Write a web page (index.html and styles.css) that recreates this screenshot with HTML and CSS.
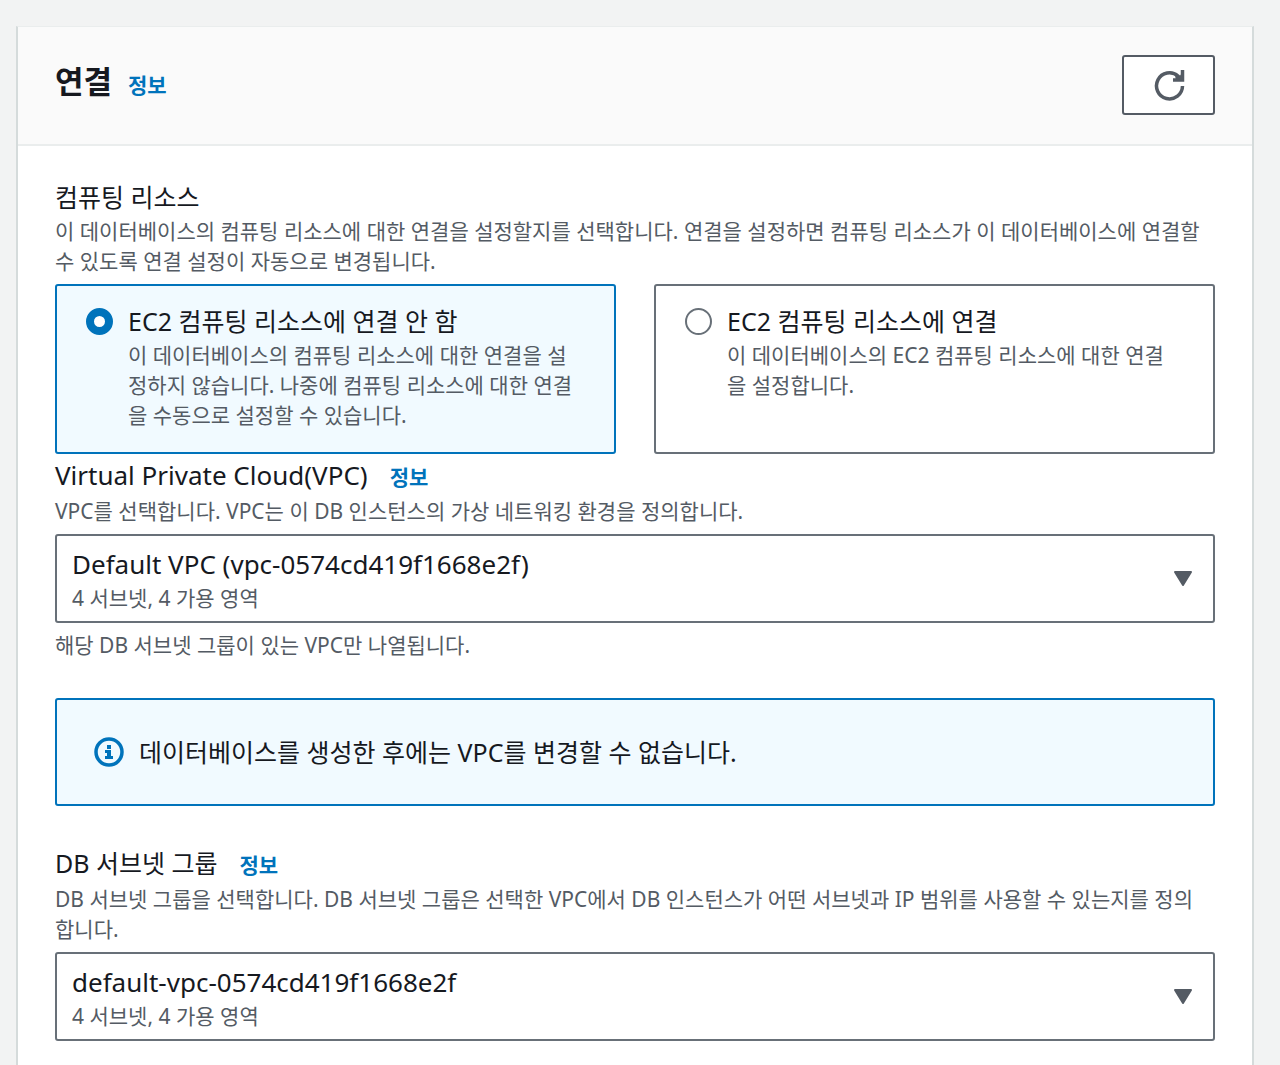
FILE: index.html
```
<!DOCTYPE html>
<html lang="ko">
<head>
  <meta charset="UTF-8">
  <meta name="viewport" content="width=device-width, initial-scale=1">
  <title>연결</title>
  <link rel="stylesheet" href="styles.css">
</head>
<body>
  <section class="panel">
    <header class="panel-header">
      <h2>연결</h2>
      <a class="info" href="#">정보</a>
      <button class="refresh" type="button" aria-label="새로 고침">
        <svg width="32" height="32" viewBox="0 0 32 32" fill="none" stroke="currentColor" stroke-width="3.5">
          <path d="M29.500 17a13 13 0 1 1-4.500-10l3 3"/>
          <path d="M29.500 1v10H20"/>
          <path d="M22 6l4 2 3-4v8h-6z" fill="currentColor" stroke="none"/>
        </svg>
      </button>
    </header>

    <form class="panel-body">
      <fieldset class="field">
        <legend class="label">컴퓨팅 리소스</legend>
        <p class="desc">이 데이터베이스의 컴퓨팅 리소스에 대한 연결을 설정할지를 선택합니다. 연결을 설정하면 컴퓨팅 리소스가 이 데이터베이스에 연결할 수 있도록 연결 설정이 자동으로 변경됩니다.</p>
        <div class="tiles">
          <label class="tile">
            <input type="radio" name="compute" checked>
            <span class="tile-text">
              <span class="label">EC2 컴퓨팅 리소스에 연결 안 함</span>
              <span class="desc">이 데이터베이스의 컴퓨팅 리소스에 대한 연결을 설정하지 않습니다. 나중에 컴퓨팅 리소스에 대한 연결을 수동으로 설정할 수 있습니다.</span>
            </span>
          </label>
          <label class="tile">
            <input type="radio" name="compute">
            <span class="tile-text">
              <span class="label">EC2 컴퓨팅 리소스에 연결</span>
              <span class="desc">이 데이터베이스의 EC2 컴퓨팅 리소스에 대한 연결을 설정합니다.</span>
            </span>
          </label>
        </div>
      </fieldset>

      <div class="field">
        <div class="label-row">
          <label class="label" for="vpc" lang="en">Virtual Private Cloud(VPC)</label>
          <a class="info" href="#">정보</a>
        </div>
        <p class="desc">VPC를 선택합니다. VPC는 이 DB 인스턴스의 가상 네트워킹 환경을 정의합니다.</p>
        <div class="select">
          <select id="vpc" lang="en" aria-describedby="vpc-detail">
            <option>Default VPC (vpc-0574cd419f1668e2f)</option>
          </select>
          <span class="desc" id="vpc-detail">4 서브넷, 4 가용 영역</span>
          <svg class="caret" width="20" height="16" viewBox="0 0 20 16"><path d="M2 1h16L10 14z" fill="currentColor" stroke="currentColor" stroke-width="2" stroke-linejoin="round"/></svg>
        </div>
        <p class="desc">해당 DB 서브넷 그룹이 있는 VPC만 나열됩니다.</p>
      </div>

      <div class="alert">
        <svg width="30" height="30" viewBox="0 0 30 30" fill="none" stroke="currentColor">
          <circle cx="15" cy="15" r="13" stroke-width="3.5"/>
          <path d="M13 8h4v4h-4zM11 13h6v6h2v3h-8v-3h2v-3h-2z" fill="currentColor" stroke="none"/>
        </svg>
        <span>데이터베이스를 생성한 후에는 VPC를 변경할 수 없습니다.</span>
      </div>

      <div class="field">
        <div class="label-row">
          <label class="label" for="subnet">DB 서브넷 그룹</label>
          <a class="info" href="#">정보</a>
        </div>
        <p class="desc">DB 서브넷 그룹을 선택합니다. DB 서브넷 그룹은 선택한 VPC에서 DB 인스턴스가 어떤 서브넷과 IP 범위를 사용할 수 있는지를 정의합니다.</p>
        <div class="select">
          <select id="subnet" lang="en" aria-describedby="subnet-detail">
            <option>default-vpc-0574cd419f1668e2f</option>
          </select>
          <span class="desc" id="subnet-detail">4 서브넷, 4 가용 영역</span>
          <svg class="caret" width="20" height="16" viewBox="0 0 20 16"><path d="M2 1h16L10 14z" fill="currentColor" stroke="currentColor" stroke-width="2" stroke-linejoin="round"/></svg>
        </div>
      </div>
    </form>
  </section>
</body>
</html>
```

FILE: styles.css
```
* { box-sizing: border-box; }

body {
  margin: 0;
  padding: 26px 26px 0 16px;
  background: #f2f3f3;
  color: #16191f;
  font-family: "Noto Sans", "Noto Sans CJK KR", sans-serif;
  font-size: 25px;
  line-height: 38px;
}

h2, p, fieldset { margin: 0; padding: 0; border: 0; }

.panel {
  background: #fff;
  border: 2px solid #d5dbdb;
  border-top: 1px solid #eaeded;
  border-bottom: 0;
}

.panel-header {
  display: flex;
  align-items: baseline;
  padding: 28px 37px 29px;
  background: #fafafa;
  border-bottom: 2px solid #eaeded;
}

h2 { font-size: 31px; font-weight: 700; line-height: 52px; }

.info {
  margin-left: 16px;
  color: #0073bb;
  font-size: 21px;
  font-weight: 700;
  text-decoration: none;
}

.refresh {
  display: flex;
  align-items: center;
  justify-content: center;
  align-self: center;
  width: 93px;
  height: 60px;
  margin-left: auto;
  padding: 0;
  background: #fff;
  border: 2px solid #545b64;
  border-radius: 3px;
  color: #545b64;
}

.panel-body { padding: 32px 37px 40px; }

.label { display: block; padding: 0; line-height: 38px; }
.label:lang(en) { font-size: 26px; }
.label-row { display: flex; align-items: baseline; }
.label-row .info { margin-left: 22px; }

.desc {
  display: block;
  color: #545b64;
  font-size: 21px;
  line-height: 30px;
}
p.desc { padding-right: 6px; }

.tiles {
  display: grid;
  grid-template-columns: 1fr 1fr;
  gap: 38px;
  margin-top: 8px;
  margin-bottom: 2px;
}

.tile {
  display: flex;
  gap: 15px;
  padding: 16px 32px 22px 29px;
  border: 2px solid #687078;
  border-radius: 3px;
}
.tile:has(:checked) { background: #f1faff; border-color: #0073bb; }
.tile-text { flex: 1; }

.tile input {
  appearance: none;
  flex: none;
  width: 27px;
  height: 27px;
  margin: 6px 0 0;
  background: #fff;
  border: 2px solid #687078;
  border-radius: 50%;
}
.tile input:checked { border: 8px solid #0073bb; }

/* the select fills the box, the detail line and caret sit over it */
.select { display: grid; margin: 8px 0 7px; }
.select > * { grid-area: 1 / 1; }

select {
  appearance: none;
  width: 100%;
  height: 89px;
  padding: 0 60px 30px 15px;
  background: #fff;
  border: 2px solid #687078;
  border-radius: 3px;
  color: inherit;
  font: inherit;
  font-size: 26px;
}

.select .desc { align-self: end; padding: 0 0 10px 17px; pointer-events: none; }
.caret { place-self: center end; margin-right: 22px; color: #545b64; pointer-events: none; }

.alert {
  display: flex;
  align-items: center;
  gap: 15px;
  margin: 38px 0;
  padding: 33px 37px;
  background: #f1faff;
  border: 2px solid #0073bb;
  border-radius: 3px;
}
.alert svg { color: #0073bb; }
```
